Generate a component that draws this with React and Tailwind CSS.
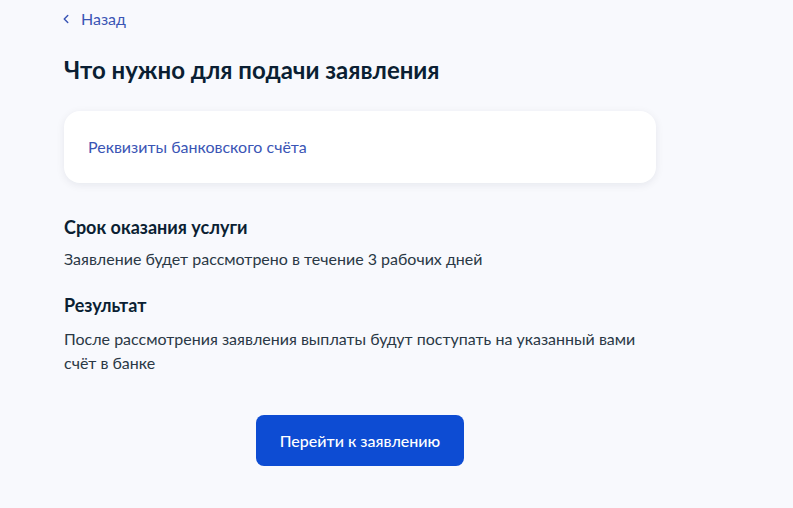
import { ChevronLeft } from "lucide-react";

export default function App() {
  return (
    <div
      className="min-h-[508px] bg-[#f8f9fd] text-[#0b1f33]"
      style={{ fontFamily: "Lato, 'Noto Sans', sans-serif" }}
    >
      <div className="w-[592px] ml-16 pt-[9px]">
        <a href="#" className="flex items-center gap-[8px] text-[16px] leading-5 text-[#3a55b5]">
          <ChevronLeft className="w-[14px] h-[14px] -ml-[5px]" strokeWidth={2.5} />
          Назад
        </a>

        <h1 className="mt-[25px] text-[24px] leading-8 font-bold">
          Что нужно для подачи заявления
        </h1>

        <div className="mt-[25px] h-[72px] flex items-center px-6 bg-white rounded-2xl shadow-[0_2px_8px_rgba(11,31,51,0.08)]">
          <a href="#" className="text-[16px] leading-6 text-[#3a55b5] -mt-[1px]">
            Реквизиты банковского счёта
          </a>
        </div>

        <h2 className="mt-[32px] text-[18px] leading-6 font-bold">Срок оказания услуги</h2>
        <p className="mt-[8px] text-[16px] leading-6 text-[#2a3845]">
          Заявление будет рассмотрено в течение 3 рабочих дней
        </p>

        <h2 className="mt-[22px] text-[18px] leading-6 font-bold">Результат</h2>
        <p className="mt-[10px] text-[16px] leading-6 text-[#2a3845] pr-4">
          После рассмотрения заявления выплаты будут поступать на указанный вами счёт в банке
        </p>

        <div className="flex justify-center mt-[40px]">
          <button className="w-[208px] h-[51px] rounded-lg bg-[#0d4cd3] text-white text-[16px] font-medium">
            Перейти к заявлению
          </button>
        </div>
      </div>
    </div>
  );
}
